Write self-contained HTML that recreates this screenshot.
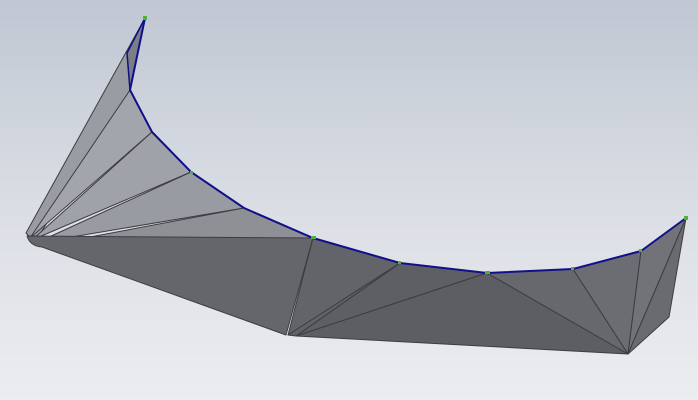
<!DOCTYPE html>
<html><head><style>
html,body{margin:0;padding:0;width:698px;height:400px;overflow:hidden;}
</style></head><body>
<svg width="698" height="400" viewBox="0 0 698 400" xmlns="http://www.w3.org/2000/svg">
<defs>
<linearGradient id="bg" x1="0" y1="0" x2="0" y2="1">
<stop offset="0" stop-color="#c0c7d3"/><stop offset="0.55" stop-color="#dcdfe5"/><stop offset="1" stop-color="#ebedf0"/>
</linearGradient>
</defs>
<rect width="698" height="400" fill="url(#bg)"/>
<g stroke="#3c3d42" stroke-width="1" stroke-linejoin="round">
<polygon points="26,233 145,18 127,53 130,90 35,242" fill="#9a9ca3"/>
<polygon points="130,90 152,132 30,238" fill="#a3a5ac"/>
<polygon points="152,132 191,172 32,240" fill="#a0a2a9"/>
<polygon points="191,172 244,208 36,243" fill="#999ba2"/>
<polygon points="244,208 313,238 42,246" fill="#8e9096"/>
<polygon points="145,18 130,90 127,53" fill="#7c7e86"/>
<path d="M27,236 Q30,246 42,247 L286,335 L313,238 Z" fill="#65666b"/>
<polygon points="313,238 400,263 288,335" fill="#636469"/>
<polygon points="400,263 487,273 296,336" fill="#5e5f64"/>
<polygon points="288,335 400,263 296,336" fill="#616267"/>
<polygon points="487,273 628,354 296,336" fill="#5d5e63"/>
<polygon points="487,273 573,269 628,354" fill="#67686d"/>
<polygon points="573,269 641,251 628,354" fill="#6c6d72"/>
<polygon points="641,251 686,218 628,354" fill="#727378"/>
<polygon points="686,218 669,317 628,354" fill="#6a6b70"/>
</g>
<polyline points="145,18 130,90 152,132 191,172 244,208 313,238 400,263 487,273 573,269 641,251 686,218" fill="none" stroke="#10108a" stroke-width="2"/>
<polyline points="145,18 127,53 130,90" fill="none" stroke="#10108a" stroke-width="1.5"/>
<g fill="#4fb23a">
<rect x="143" y="16" width="4" height="4"/><rect x="684" y="216" width="4" height="4"/>
<rect x="311" y="236" width="5" height="3"/><rect x="485" y="271" width="5" height="3"/>
<rect x="398" y="261" width="3" height="3"/><rect x="639" y="249" width="3" height="3"/>
<rect x="571" y="267" width="3" height="3"/><rect x="190" y="171" width="3" height="3"/>
</g>
</svg>
</body></html>
